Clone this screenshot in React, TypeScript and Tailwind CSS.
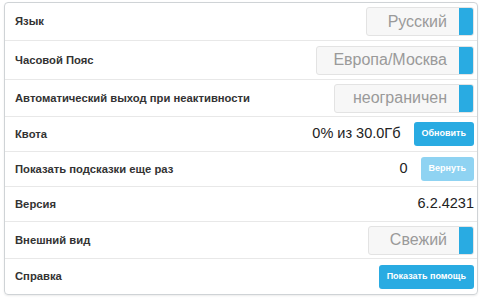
import React from 'react'

type Row = {
  label: string
  height: string
  kind: 'select' | 'value' | 'button' | 'valueButton'
  value?: string
  selectWidth?: string
  button?: string
  faded?: boolean
}

const ROWS: Row[] = [
  { label: 'Язык', height: 'h-[38px]', kind: 'select', value: 'Русский', selectWidth: 'w-[108px]' },
  { label: 'Часовой Пояс', height: 'h-[39px]', kind: 'select', value: 'Европа/Москва', selectWidth: 'w-[158px]' },
  { label: 'Автоматический выход при неактивности', height: 'h-[37px]', kind: 'select', value: 'неограничен', selectWidth: 'w-[140px]' },
  { label: 'Квота', height: 'h-[35px]', kind: 'valueButton', value: '0% из 30.0Гб', button: 'Обновить' },
  { label: 'Показать подсказки еще раз', height: 'h-[35px]', kind: 'valueButton', value: '0', button: 'Вернуть', faded: true },
  { label: 'Версия', height: 'h-[35px]', kind: 'value', value: '6.2.4231' },
  { label: 'Внешний вид', height: 'h-[37px]', kind: 'select', value: 'Свежий', selectWidth: 'w-[106px]' },
  { label: 'Справка', height: 'h-[35px]', kind: 'button', button: 'Показать помощь' },
]

function Select({ value, width }: { value: string; width: string }) {
  return (
    <div className={`flex h-[29px] ${width} items-stretch overflow-hidden rounded-[3px] border border-[#e3e3e3] bg-[#f7f7f7]`}>
      <div className="flex flex-1 items-center justify-end pr-[12px] text-[16px] text-[#9a9a9a]">{value}</div>
      <div className="w-[14px] bg-[#29abe2]" />
    </div>
  )
}

function Button({ text, faded }: { text: string; faded?: boolean }) {
  return (
    <div
      className={`flex h-[24px] items-center rounded-[3px] px-[8px] text-[9px] font-bold text-white ${
        faded ? 'bg-[#8fd3f2]' : 'bg-[#29abe2]'
      }`}
    >
      {text}
    </div>
  )
}

export default function App() {
  return (
    <div className="h-[300px] w-[483px] bg-white pl-[4px] pt-[2px] font-['Liberation_Sans',Arial,sans-serif]">
      <div className="w-[474px] overflow-hidden rounded-[4px] border border-[#cfd3d6] shadow-[0_1px_2px_rgba(0,0,0,0.08)]">
        {ROWS.map((row, i) => (
          <div
            key={row.label}
            className={`flex ${row.height} items-center justify-between pl-[10px] pr-[3px] ${
              i < ROWS.length - 1 ? 'border-b border-[#e8e8e8]' : ''
            }`}
          >
            <span className="text-[11.25px] font-bold text-[#333]">{row.label}</span>
            {row.kind === 'select' && <Select value={row.value!} width={row.selectWidth!} />}
            {row.kind === 'value' && <span className="text-[14.5px] text-[#222]">{row.value}</span>}
            {row.kind === 'valueButton' && (
              <div className="flex items-center gap-[13px]">
                <span className="text-[14.5px] text-[#222]">{row.value}</span>
                <Button text={row.button!} faded={row.faded} />
              </div>
            )}
            {row.kind === 'button' && <Button text={row.button!} />}
          </div>
        ))}
      </div>
    </div>
  )
}
